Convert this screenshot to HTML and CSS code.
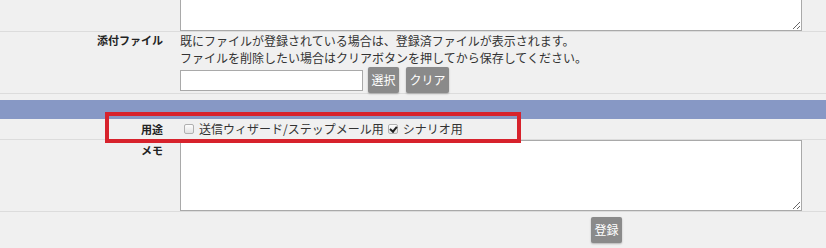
FILE: index.html
```html
<!DOCTYPE html>
<html lang="ja">
<head>
<meta charset="utf-8">
<title>登録フォーム</title>
<link rel="stylesheet" href="styles.css">
</head>
<body>
<div class="page">
  <div class="row row-top">
    <div class="label"></div>
    <div class="field"><textarea class="ta ta-top"></textarea></div>
  </div>
  <div class="row row-file">
    <div class="label">添付ファイル</div>
    <div class="field">
      <p class="note">既にファイルが登録されている場合は、登録済ファイルが表示されます。</p>
      <p class="note">ファイルを削除したい場合はクリアボタンを押してから保存してください。</p>
      <div class="file-line">
        <input type="text" class="file-input">
        <button type="button" class="btn btn-select">選択</button>
        <button type="button" class="btn btn-clear">クリア</button>
      </div>
    </div>
  </div>
  <div class="section-bar"></div>
  <div class="row row-use">
    <div class="label">用途</div>
    <div class="field options">
      <input type="checkbox" class="check" id="u1">
      <label for="u1" class="opt">送信ウィザード/ステップメール用</label>
      <input type="checkbox" class="check" id="u2" checked>
      <label for="u2" class="opt">シナリオ用</label>
    </div>
  </div>
  <div class="row row-memo">
    <div class="label">メモ</div>
    <div class="field"><textarea class="ta ta-memo"></textarea></div>
  </div>
  <div class="actions">
    <button type="button" class="btn btn-submit">登録</button>
  </div>
  <div class="highlight"></div>
</div>
</body>
</html>
```

FILE: styles.css
```css
html, body {
  margin: 0;
  padding: 0;
  background: #f0f0f0;
}
body {
  font-family: "Noto Sans CJK JP", "Noto Sans", sans-serif;
  font-size: 12px;
  color: #333;
  overflow: hidden;
}
.page {
  position: relative;
  width: 826px;
  height: 248px;
  overflow: hidden;
}
.row {
  display: grid;
  grid-template-columns: 180px 622px;
  border-bottom: 1px solid #dcdcdc;
}
.label {
  box-sizing: border-box;
  padding-right: 17px;
  text-align: right;
  font-size: 11px;
  font-weight: bold;
  color: #222;
  line-height: 17px;
}
.field {
  min-width: 0;
}
.ta {
  display: block;
  box-sizing: border-box;
  width: 622px;
  height: 71px;
  margin: 0;
  border: 1px solid #a9a9a9;
  background: #fff;
  font: inherit;
}
.ta-top {
  margin-top: -40px;
}
.note {
  margin: 0;
  line-height: 17px;
  color: #333;
}
.file-line {
  display: flex;
  align-items: center;
  margin-top: 1px;
  height: 26px;
}
.file-input {
  box-sizing: border-box;
  width: 183px;
  height: 21px;
  margin: 0;
  border: 1px solid #a9a9a9;
  background: #fff;
}
.btn {
  box-sizing: border-box;
  height: 26px;
  margin: 0;
  padding: 0 3.5px;
  border: none;
  border-radius: 2px;
  background: #8a8a8a;
  color: #fff;
  font-family: inherit;
  font-size: 12px;
  line-height: 26px;
  box-shadow: 0 1px 2px rgba(0, 0, 0, 0.25);
}
.btn-select {
  margin-left: 5px;
}
.btn-clear {
  margin-left: 7px;
}
.section-bar {
  height: 19px;
  margin-top: 6px;
  background: #8798c5;
}
.row-use .label {
  line-height: 20px;
}
.options {
  display: flex;
  align-items: center;
  height: 20px;
}
.check {
  -webkit-appearance: none;
  appearance: none;
  position: relative;
  box-sizing: border-box;
  width: 10px;
  height: 10px;
  margin: 0 5px 0 4px;
  border: 1px solid #b0b0b0;
  border-radius: 2px;
  background: linear-gradient(#fdfdfd, #e2e2e2);
}
.check:checked::after {
  content: "";
  position: absolute;
  left: 2.5px;
  top: 0;
  width: 2.5px;
  height: 5px;
  border: solid #222;
  border-width: 0 2px 2px 0;
  transform: rotate(40deg);
}
.opt {
  color: #333;
  line-height: 20px;
}
.row-memo .label {
  padding-top: 2px;
}
.actions {
  padding: 5px 0 0 591px;
}
.highlight {
  position: absolute;
  left: 105px;
  top: 112px;
  width: 416px;
  height: 31px;
  box-sizing: border-box;
  border: 4px solid #d7222c;
}
```
